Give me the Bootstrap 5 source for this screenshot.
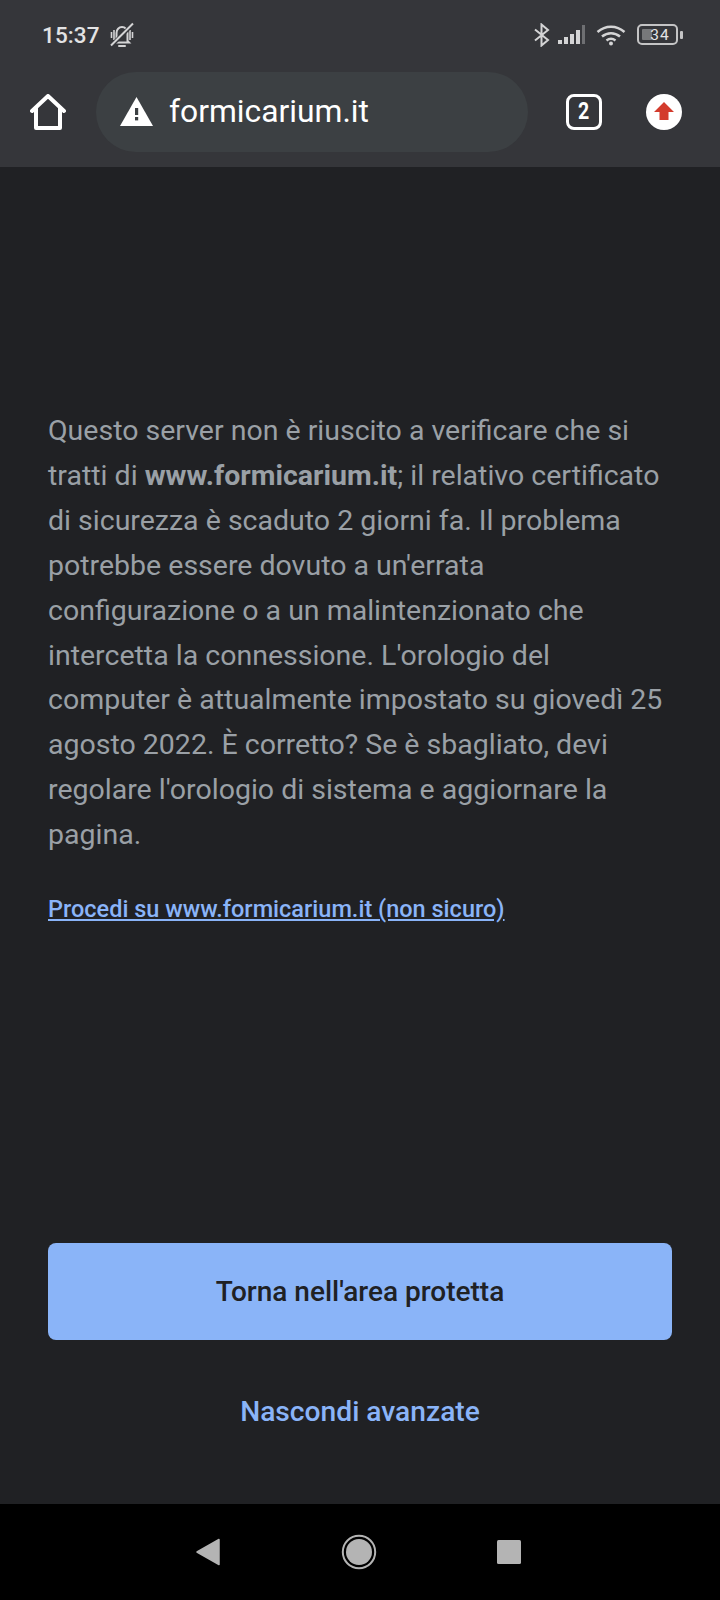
<!DOCTYPE html>
<html lang="it">
<head>
    <meta charset="UTF-8">
    <meta name="viewport" content="width=device-width, initial-scale=1.0">
    <title>formicarium.it</title>
    <link href="https://cdn.jsdelivr.net/npm/bootstrap@5.3.3/dist/css/bootstrap.min.css" rel="stylesheet">
    <style>
        body {
            width: 720px;
            height: 1600px;
            overflow: hidden;
            background: #202124;
            font-family: Roboto, sans-serif;
        }
        .phone { height: 1600px; }
        .chrome-top { height: 167px; background: #35363a; }
        .status-row { height: 71px; padding: 0 37px 1px 42px; color: #e3e3e4; }
        .clock { font-size: 22.5px; font-weight: 500; line-height: 1; letter-spacing: .1px; }
        .toolbar-row { height: 81px; padding: 0 30px 0 30px; }
        .url-pill {
            width: 432px;
            height: 80px;
            margin-left: 30px;
            border-radius: 40px;
            background: #3c4043;
            padding-left: 24px;
            color: #fff;
            font-size: 31.8px;
        }
        .tab-count {
            width: 36px;
            height: 36px;
            margin-left: 38px;
            border: 3.5px solid #fff;
            border-radius: 8px;
            color: #fff;
            font-size: 23px;
            font-weight: 700;
            line-height: 1;
        }
        .tab-count span { display: block; transform: scaleX(.85); }
        .warning-body { background: #202124; padding: 0 48px; }
        .warning-text {
            margin: 242px 0 0;
            color: #9aa0a6;
            font-size: 28.5px;
            line-height: 44.9px;
        }
        .warning-text strong { font-weight: 700; }
        .proceed-link {
            display: block;
            margin-top: 35px;
            color: #8ab4f8;
            font-size: 23.5px;
            font-weight: 500;
            line-height: 32px;
        }
        .safe-btn {
            width: 624px;
            height: 97px;
            background: #8ab4f8;
            border: 0;
            border-radius: 8px;
            color: #202124;
            font-size: 28px;
            font-weight: 500;
            margin-top: 318px;
        }
        .hide-link {
            margin-top: 54px;
            color: #8ab4f8;
            font-size: 28.2px;
            font-weight: 500;
            line-height: 36px;
        }
        .nav-bottom { height: 96px; background: #000; }
        .nav-bottom svg { position: absolute; }
    </style>
</head>
<body>
<div class="phone d-flex flex-column">

    <div class="chrome-top flex-shrink-0">
        <div class="status-row d-flex align-items-center">
            <span class="clock">15:37</span>
            <svg class="ms-2" width="28" height="28" viewBox="0 0 28 28" fill="none" stroke="#d4d4d5" stroke-width="2">
                <path d="M8.500 20V12c0-3.300 2.400-6 5.500-6s5.500 2.700 5.500 6v8l1.500 1.500H7z"/>
                <path d="M11 25h6" stroke-linecap="round"/>
                <path d="M3.500 11v6M24.500 11v6M6 9v10M22 9v10" stroke-width="1.600"/>
                <path d="M25 3 3 25" stroke="#35363a" stroke-width="4"/>
                <path d="M25 2.500 3 24.500"/>
            </svg>
            <div class="ms-auto d-flex align-items-center">
                <svg width="18" height="24" viewBox="0 0 18 24" fill="none" stroke="#d4d4d5" stroke-width="2">
                    <path d="M2 6.500 15 17l-6.500 5.500V1.500L15 7 2 17.500"/>
                </svg>
                <svg style="margin-left:7px" width="28" height="20" viewBox="0 0 28 20" fill="#d4d4d5">
                    <rect x="0" y="15" width="4" height="4"/>
                    <rect x="6" y="12" width="4" height="7"/>
                    <rect x="12" y="9" width="4" height="10"/>
                    <rect x="18" y="5" width="4" height="14"/>
                    <rect x="24" y="0" width="3" height="19" fill="#6e6f72"/>
                </svg>
                <svg style="margin-left:10px" width="30" height="22" viewBox="0 0 30 22" fill="none" stroke="#d4d4d5" stroke-width="2.500">
                    <path d="M1.500 8c8-7 19-7 27 0"/>
                    <path d="M6 12.500c5.500-4.500 12.500-4.500 18 0"/>
                    <path d="M10.500 16.500c3-2.300 6-2.300 9 0"/>
                    <circle cx="15" cy="19.500" r="2" fill="#d4d4d5" stroke="none"/>
                </svg>
                <svg style="margin-left:11px" width="46" height="22" viewBox="0 0 46 22">
                    <rect x="1" y="1" width="39" height="19" rx="4" fill="none" stroke="#c4c4c5" stroke-width="2"/>
                    <rect x="5" y="5" width="10" height="11" rx="1" fill="#77787a"/>
                    <rect x="43" y="7" width="3" height="8" rx="1" fill="#c4c4c5"/>
                    <text x="23" y="16" text-anchor="middle" font-family="Roboto, sans-serif" font-size="15.500" letter-spacing="1" fill="#e3e3e4">34</text>
                </svg>
            </div>
        </div>
        <div class="toolbar-row d-flex align-items-center">
            <svg width="36" height="36" viewBox="0 0 36 36" fill="none" stroke="#fff" stroke-width="4" stroke-linejoin="round" stroke-linecap="round">
                <path d="M2 17 18 2l16 15"/>
                <path d="M6 14v20h24V14"/>
            </svg>
            <div class="url-pill d-flex align-items-center">
                <svg width="33" height="29" viewBox="0 0 33 29">
                    <path d="M16.500 0 33 29H0z" fill="#fff"/>
                    <rect x="15" y="11" width="3.200" height="7" fill="#3c4043"/>
                    <rect x="15" y="20" width="3.200" height="3.400" fill="#3c4043"/>
                </svg>
                <span class="ms-3">formicarium.it</span>
            </div>
            <div class="tab-count d-flex align-items-center justify-content-center"><span>2</span></div>
            <svg style="margin-left:44px" width="36" height="36" viewBox="0 0 36 36">
                <circle cx="18" cy="18" r="18" fill="#fff"/>
                <path d="M18 8 28 18h-5.500v8h-9v-8H8z" fill="#d33b2c"/>
            </svg>
        </div>
    </div>

    <div class="warning-body flex-grow-1 d-flex flex-column">
        <p class="warning-text">Questo server non è riuscito a verificare che si tratti di <strong>www.formicarium.it</strong>; il relativo certificato di sicurezza è scaduto 2 giorni fa. Il problema potrebbe essere dovuto a un'errata configurazione o a un malintenzionato che intercetta la connessione. L'orologio del computer è attualmente impostato su giovedì 25 agosto 2022. È corretto? Se è sbagliato, devi regolare l'orologio di sistema e aggiornare la pagina.</p>
        <a class="proceed-link" href="#">Procedi su www.formicarium.it (non sicuro)</a>
        <button class="btn safe-btn" type="button">Torna nell'area protetta</button>
        <div class="hide-link text-center">Nascondi avanzate</div>
    </div>

    <div class="nav-bottom flex-shrink-0 position-relative">
        <svg style="left:196px;top:34px" width="24" height="28" viewBox="0 0 24 28">
            <path d="M23 1.500v25L1 14z" fill="#b4b4b4" stroke="#b4b4b4" stroke-width="1.500" stroke-linejoin="round"/>
        </svg>
        <svg style="left:341px;top:30px" width="36" height="36" viewBox="0 0 36 36">
            <circle cx="18" cy="18" r="16.200" fill="none" stroke="#b4b4b4" stroke-width="2"/>
            <circle cx="18" cy="18" r="13" fill="#b4b4b4"/>
        </svg>
        <svg style="left:497px;top:36px" width="24" height="24" viewBox="0 0 24 24">
            <rect width="24" height="24" rx="1.500" fill="#b4b4b4"/>
        </svg>
    </div>
</div>
<script src="https://cdn.jsdelivr.net/npm/bootstrap@5.3.3/dist/js/bootstrap.bundle.min.js"></script>
</body>
</html>
